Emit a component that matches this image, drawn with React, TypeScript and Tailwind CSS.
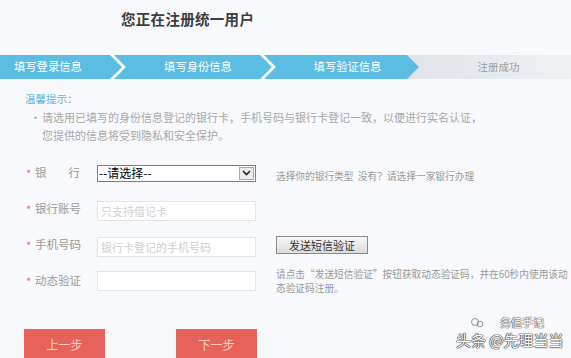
import React from "react";

const font = "font-['Noto_Sans_CJK_SC','Noto_Sans',sans-serif]";

function Row({ label, children, hint }: { label: React.ReactNode; children: React.ReactNode; hint?: React.ReactNode }) {
  return (
    <div className="flex h-[36px] items-center pl-[26px]">
      <span className="w-[9px] text-[11px] leading-none text-[#e06a7c]">*</span>
      <span className="w-[62px] text-[11.5px] leading-none text-[#9a9a9a]">{label}</span>
      <div className="w-[159px]">{children}</div>
      <div className="ml-[20px]">{hint}</div>
    </div>
  );
}

export default function App() {
  return (
    <div className={`relative h-[358px] w-[571px] overflow-hidden bg-[#f7f9fc] ${font}`}>
      <div className="h-[55px] pl-[121px] pt-[10px]">
        <h1 className="text-[14.5px] font-bold leading-[17px] tracking-[0.3px] text-[#3d3d3d]">您正在注册统一用户</h1>
      </div>

      <div className="flex h-[24px] text-[11.3px] leading-none">
        <div className="relative z-10 flex w-[122px] shrink-0 items-center bg-[#5bbde2] pl-[14px] text-white [clip-path:polygon(0_0,calc(100%_-_12px)_0,100%_50%,calc(100%_-_12px)_100%,0_100%)]">
          填写登录信息
        </div>
        <div className="relative z-10 -ml-[8px] flex w-[158px] shrink-0 items-center justify-center bg-[#5bbde2] pl-[10px] text-white [clip-path:polygon(0_0,calc(100%_-_12px)_0,100%_50%,calc(100%_-_12px)_100%,0_100%,12px_50%)]">
          填写身份信息
        </div>
        <div className="relative z-10 -ml-[8px] flex w-[155px] shrink-0 items-center justify-center bg-[#5bbde2] pl-[12px] text-white [clip-path:polygon(0_0,calc(100%_-_12px)_0,100%_50%,calc(100%_-_12px)_100%,0_100%,12px_50%)]">
          填写验证信息
        </div>
        <div className="-ml-[14px] flex flex-1 items-center justify-center bg-gradient-to-r from-[#dfe3e8] to-[#eef1f4] pl-[21px] text-[10.5px] text-[#9d9d9d]">
          注册成功
        </div>
      </div>

      <div className="mt-[11px] pl-[25px] text-[11px] leading-[18px]">
        <div className="text-[10.5px] text-[#5db6dd]">温馨提示：</div>
        <div className="flex text-[#a8a8a8]">
          <span className="w-[17px] pl-[5px] text-[#9a9a9a]">•</span>
          <div>
            <div>请选用已填写的身份信息登记的银行卡，手机号码与银行卡登记一致，以便进行实名认证，</div>
            <div>您提供的信息将受到隐私和安全保护。</div>
          </div>
        </div>
      </div>

      <div className="mt-[11px]">
        <Row
          label={<span className="flex w-[45px] justify-between"><span>银</span><span>行</span></span>}
          hint={<span className="text-[9.7px] text-[#9a9a9a]">选择你的银行类型&nbsp;&nbsp;没有？请选择一家银行办理</span>}
        >
          <div className="flex h-[17px] items-center border border-[#7d7d7d] bg-white">
            <span className="flex-1 pl-[1px] text-[12px] leading-none text-black">--请选择--</span>
            <span className="mr-[1px] flex h-[13px] w-[15px] items-center justify-center border border-[#a9a9a9] bg-[#ececec]">
              <svg width="9" height="6" viewBox="0 0 9 6"><path d="M1 1l3.5 3.5L8 1" stroke="#222" strokeWidth="1.6" fill="none" /></svg>
            </span>
          </div>
        </Row>
        <Row label="银行账号">
          <input
            readOnly
            placeholder="只支持借记卡"
            className="h-[20px] w-full border border-[#e2e4e8] bg-white pl-[3px] text-[11px] outline-none placeholder:text-[#cfcfcf]"
          />
        </Row>
        <Row
          label="手机号码"
          hint={
            <div className="flex h-[18px] w-[92px] items-center justify-center border border-[#8a8a8a] bg-gradient-to-b from-[#f6f6f6] to-[#dcdcdc] text-[11px] leading-none text-[#333]">
              发送短信验证
            </div>
          }
        >
          <input
            readOnly
            placeholder="银行卡登记的手机号码"
            className="h-[20px] w-full border border-[#e2e4e8] bg-white pl-[3px] text-[11px] outline-none placeholder:text-[#cfcfcf]"
          />
        </Row>
        <Row
          label="动态验证"
          hint={
            <div className="w-[295px] text-[9.7px] leading-[14px] text-[#9a9a9a]">
              <div className="whitespace-nowrap">请点击“发送短信验证”按钮获取动态验证码，并在60秒内使用该动</div>
              <div>态验证码注册。</div>
            </div>
          }
        >
          <input
            readOnly
            className="h-[20px] w-full border border-[#e2e4e8] bg-white outline-none"
          />
        </Row>
      </div>

      <div className="mt-[30px] flex pl-[24px]">
        <div className="flex h-[32px] w-[81px] items-center justify-center bg-[#e8625c] text-[12px] text-[#fbd0c8]">上一步</div>
        <div className="ml-[71px] flex h-[32px] w-[81px] items-center justify-center bg-[#e8625c] text-[12px] text-[#fbd0c8]">下一步</div>
      </div>

      <div className="absolute left-[470px] top-[317px] flex items-center gap-[6px] text-[11px] leading-none text-white [text-shadow:0_0_1px_#444,0_0_1px_#444,0_0_1px_#444]">
        <svg width="14" height="11" viewBox="0 0 14 11"><circle cx="5" cy="5" r="3.5" fill="none" stroke="#777" strokeWidth="0.8" /><circle cx="10" cy="7" r="2.8" fill="none" stroke="#777" strokeWidth="0.8" /></svg>
        <span className="ml-[10px]">务值手记</span>
      </div>
      <div className="absolute left-[456px] top-[331px] whitespace-nowrap text-[15px] leading-[18px] text-white [text-shadow:0_0_1px_#333,0_0_1px_#333,0_0_1px_#333,0_0_1px_#333]">
        头条 @先理当当
      </div>
    </div>
  );
}
